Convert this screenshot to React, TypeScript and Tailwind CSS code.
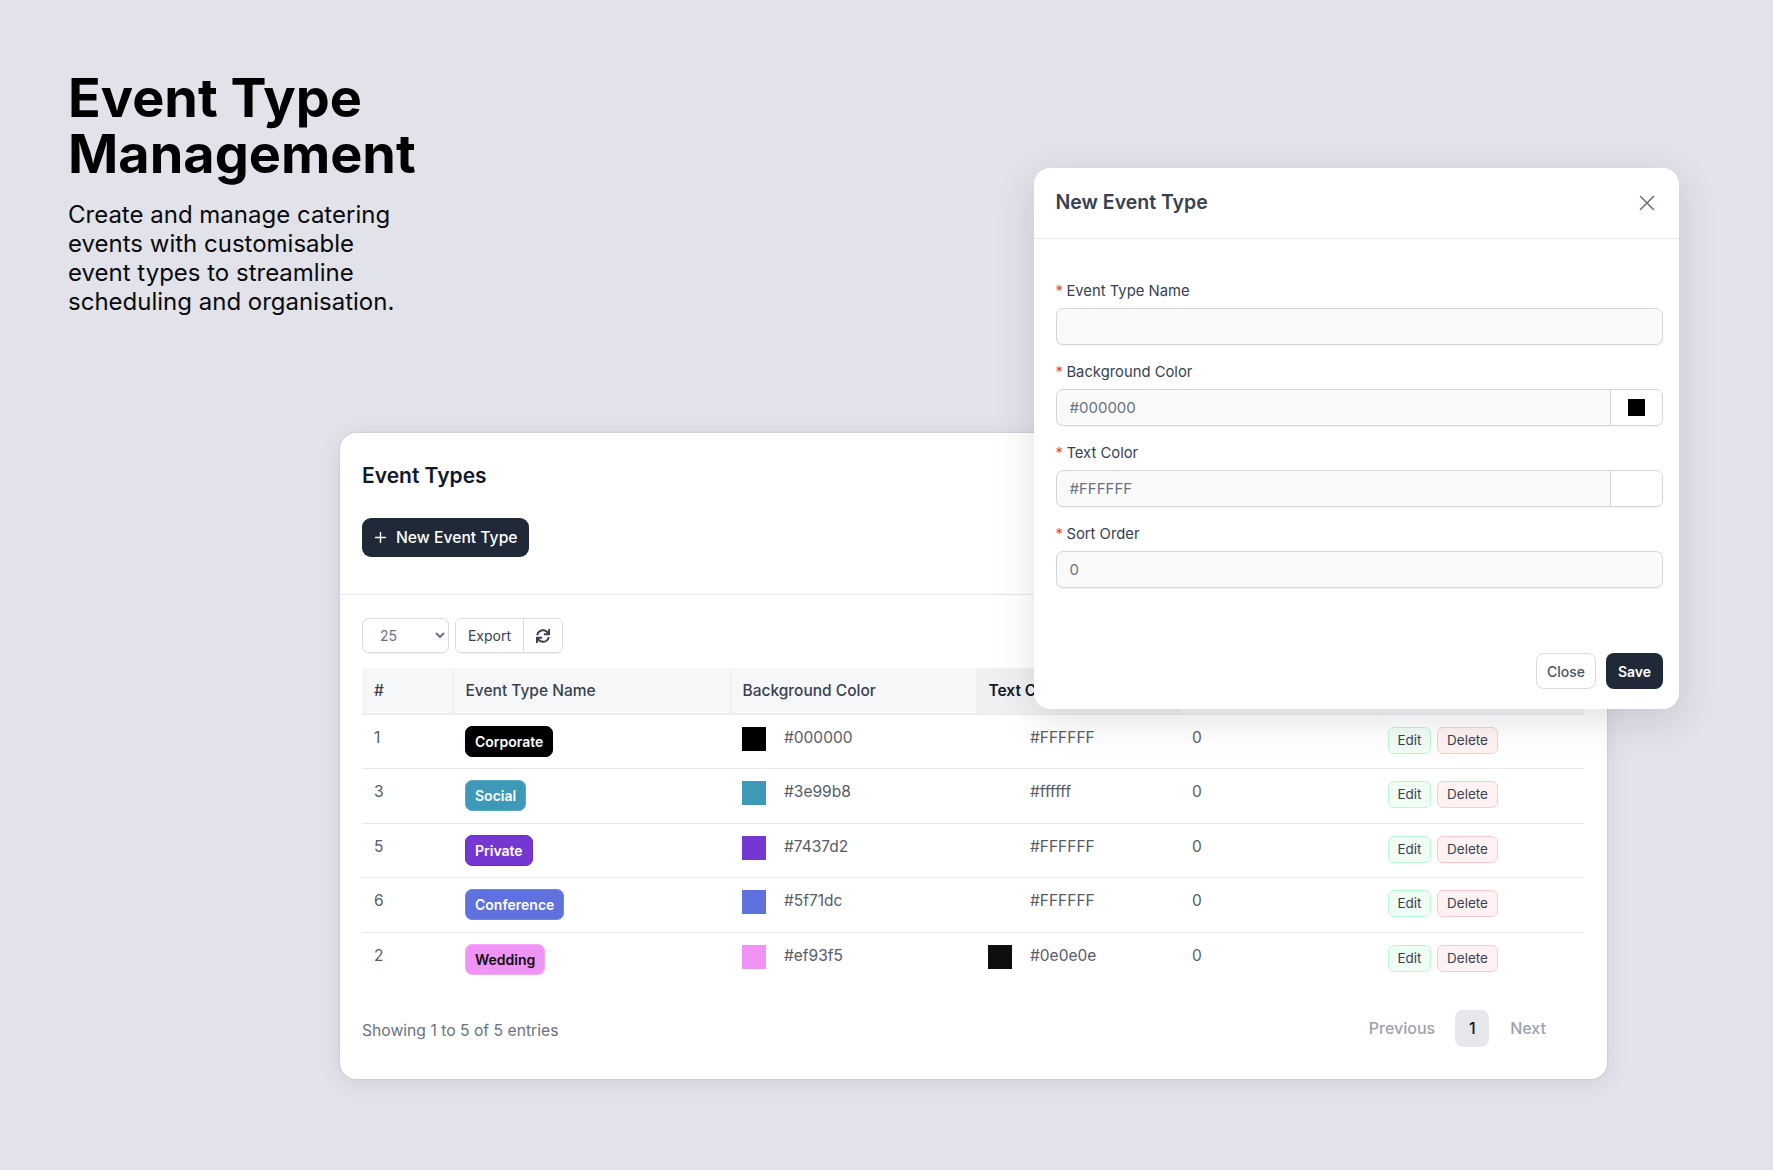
import { Plus, X } from 'lucide-react';
import { FaSync } from 'react-icons/fa';

interface EventType {
  id: number;
  name: string;
  bg: string;
  text: string;
  badgeClass: string;
  swatchClass: string;
  textSwatchClass: string;
}

const eventTypes: EventType[] = [
  { id: 1, name: 'Corporate', bg: '#000000', text: '#FFFFFF', badgeClass: 'bg-[#000000] text-white border-[#000000]', swatchClass: 'bg-[#000000]', textSwatchClass: 'bg-white' },
  { id: 3, name: 'Social', bg: '#3e99b8', text: '#ffffff', badgeClass: 'bg-[#3e99b8] text-white border-[#5aaac5]', swatchClass: 'bg-[#3e99b8]', textSwatchClass: 'bg-white' },
  { id: 5, name: 'Private', bg: '#7437d2', text: '#FFFFFF', badgeClass: 'bg-[#7437d2] text-white border-[#6a2ec7]', swatchClass: 'bg-[#7437d2]', textSwatchClass: 'bg-white' },
  { id: 6, name: 'Conference', bg: '#5f71dc', text: '#FFFFFF', badgeClass: 'bg-[#5f71dc] text-white border-[#7383e2]', swatchClass: 'bg-[#5f71dc]', textSwatchClass: 'bg-white' },
  { id: 2, name: 'Wedding', bg: '#ef93f5', text: '#0e0e0e', badgeClass: 'bg-[#ef93f5] text-[#0e0e0e] border-[#f3a8f8]', swatchClass: 'bg-[#ef93f5]', textSwatchClass: 'bg-[#0e0e0e]' },
];

function Field({ label, value, swatch }: { label: string; value: string; swatch?: string }) {
  return (
    <div>
      <label className="flex h-[22px] items-center text-[14.8px] text-[#374151]">
        <span className="mr-[3.5px] text-[#ef4444]">*</span>
        {label}
      </label>
      <div className="mt-[6px] flex h-[37px] overflow-hidden rounded-[7px] border border-[#d3d6dc] bg-[#fafafa] shadow-[0_1px_1px_rgba(0,0,0,0.05)]">
        <input
          readOnly
          value={value}
          className="min-w-0 flex-1 bg-transparent px-[13px] pt-[1px] text-[15px] text-[#6b7280] outline-none"
        />
        {swatch !== undefined && (
          <div className="flex w-[52px] items-center justify-center border-l border-[#d3d6dc] bg-white">
            <span className={`h-[17px] w-[17px] ${swatch}`} />
          </div>
        )}
      </div>
    </div>
  );
}

export default function App() {
  return (
    <div className="relative h-[1170px] w-[1773px] overflow-hidden bg-[#e1e2ea] font-['Inter',sans-serif]">
      <div className="pl-[68px] pt-[70px]">
        <h1 className="text-[54px] leading-[56px] font-bold text-black">
          Event Type
          <br />
          Management
        </h1>
        <p className="mt-[18px] text-[24px] leading-[29px] text-[#0a0a0a]">
          Create and manage catering
          <br />
          events with customisable
          <br />
          event types to streamline
          <br />
          scheduling and organisation.
        </p>
      </div>

      <div className="mt-[117px] ml-[340px] h-[646px] w-[1267px] rounded-[16px] bg-white shadow-[0_4px_24px_rgba(0,0,0,0.08),0_0_2px_rgba(0,0,0,0.18)]">
        <div className="h-[162px] border-b border-[#e5e7eb] px-[22px] pt-[28px]">
          <h2 className="text-[21px] leading-[30px] font-semibold text-[#111827]">Event Types</h2>
          <button className="mt-[27px] flex h-[39px] w-[167px] items-center gap-[7px] rounded-[9px] bg-[#1f2937] pl-[10px] text-[15.7px] font-medium text-white">
            <Plus className="h-[17px] w-[17px]" strokeWidth={2} />
            New Event Type
          </button>
        </div>

        <div className="px-[22px] pt-[23px]">
          <div className="flex h-[35px] items-stretch gap-[6px]">
            <select
              defaultValue="25"
              className="w-[87px] rounded-[7px] border border-[#d8dbe0] bg-white pl-[13px] pr-[2px] text-[14px] text-[#6b7280] shadow-[0_1px_1px_rgba(0,0,0,0.05)]"
            >
              <option value="10">10</option>
              <option value="25">25</option>
              <option value="50">50</option>
            </select>
            <div className="flex overflow-hidden rounded-[6px] border border-[#d8dbe0] text-[14px] text-[#374151] shadow-[0_1px_1px_rgba(0,0,0,0.05)]">
              <button className="w-[68px] border-r border-[#d8dbe0] bg-white">Export</button>
              <button className="flex w-[38px] items-center justify-center bg-white">
                <FaSync className="h-[14px] w-[14px]" />
              </button>
            </div>
          </div>

          <table className="mt-[15px] w-[1222px] table-fixed border-collapse text-[15.5px]">
            <colgroup>
              <col className="w-[91px]" />
              <col className="w-[277px]" />
              <col className="w-[246px]" />
              <col className="w-[204px]" />
              <col className="w-[196px]" />
              <col className="w-[208px]" />
            </colgroup>
            <thead>
              <tr className="h-[46px] border-b-2 border-[#ebecef] bg-[#f6f7f9] text-left text-[#374151]">
                <th className="border-r border-[#ebecef] px-[12px] font-medium">#</th>
                <th className="border-r border-[#ebecef] px-[12px] font-medium">Event Type Name</th>
                <th className="border-r border-[#ebecef] px-[12px] font-medium">Background Color</th>
                <th className="border-r border-[#ebecef] bg-[#eff0f2] px-[12px] font-semibold text-[#111827]">Text Color</th>
                <th className="border-r border-[#ebecef] px-[12px] font-medium">Sort Order</th>
                <th className="px-[12px] font-medium">Actions</th>
              </tr>
            </thead>
            <tbody className="text-[#555c68]">
              {eventTypes.map((row, i) => (
                <tr key={row.id} className={i < eventTypes.length - 1 ? 'h-[54.5px] border-b border-[#e8e9ec]' : 'h-[54.5px]'}>
                  <td className="px-[12px] align-top pt-[12px] leading-[22px]">{row.id}</td>
                  <td className="px-[12px] align-top pt-[11px]">
                    <span className={`inline-flex h-[31px] items-center rounded-[7px] border px-[9px] text-[14px] font-semibold ${row.badgeClass}`}>
                      {row.name}
                    </span>
                  </td>
                  <td className="px-[12px] align-top pt-[12px]">
                    <div className="flex items-start gap-[18px]">
                      <span className={`h-[24px] w-[24px] ${row.swatchClass}`} />
                      <span className="leading-[22px]">{row.bg}</span>
                    </div>
                  </td>
                  <td className="px-[12px] align-top pt-[12px]">
                    <div className="flex items-start gap-[18px]">
                      <span className={`h-[24px] w-[24px] ${row.textSwatchClass}`} />
                      <span className="leading-[22px]">{row.text}</span>
                    </div>
                  </td>
                  <td className="px-[12px] align-top pt-[12px] leading-[22px]">0</td>
                  <td className="px-[12px] align-top pt-[12px]">
                    <div className="flex gap-[6px]">
                      <button className="h-[27px] w-[43px] rounded-[6px] border border-[#bbf7d0] bg-[#f0fdf4] text-[13.5px] text-[#374151]">Edit</button>
                      <button className="h-[27px] w-[61px] rounded-[6px] border border-[#fecaca] bg-[#fef2f2] text-[13.5px] text-[#374151]">Delete</button>
                    </div>
                  </td>
                </tr>
              ))}
            </tbody>
          </table>

          <div className="mt-[23px] flex items-center justify-between pr-[39px]">
            <span className="pt-[5px] text-[15.7px] text-[#6b7280]">Showing 1 to 5 of 5 entries</span>
            <div className="flex items-center text-[16px] font-medium text-[#9ca3af]">
              <span>Previous</span>
              <span className="mr-[21px] ml-[20px] flex h-[37px] w-[34px] items-center justify-center rounded-[8px] bg-[#e5e7eb] text-[#111827]">1</span>
              <span>Next</span>
            </div>
          </div>
        </div>
      </div>

      {/* Modal sits over the table card */}
      <div className="absolute top-[168px] left-[1034px] h-[541px] w-[645px] rounded-[16px] bg-white shadow-[0_10px_40px_rgba(0,0,0,0.12)]">
        <div className="flex h-[71px] items-center justify-between border-b border-[#e5e7eb] pr-[19px] pl-[21.5px]">
          <h3 className="text-[19.5px] font-semibold text-[#374151]">New Event Type</h3>
          <X className="h-[26px] w-[26px] text-[#6b7280]" strokeWidth={1.5} />
        </div>
        <div className="flex flex-col gap-[16px] pt-[41px] pr-[16px] pl-[21.5px]">
          <Field label="Event Type Name" value="" />
          <Field label="Background Color" value="#000000" swatch="bg-black" />
          <Field label="Text Color" value="#FFFFFF" swatch="bg-white" />
          <Field label="Sort Order" value="0" />
        </div>
        <div className="absolute right-[16px] bottom-[20px] flex gap-[10px] text-[14px]">
          <button className="h-[36px] w-[60px] rounded-[8px] border border-[#d8dbe0] bg-white font-medium text-[#4b5563]">Close</button>
          <button className="h-[36px] w-[57px] rounded-[8px] bg-[#1f2937] font-semibold text-white">Save</button>
        </div>
      </div>
    </div>
  );
}
